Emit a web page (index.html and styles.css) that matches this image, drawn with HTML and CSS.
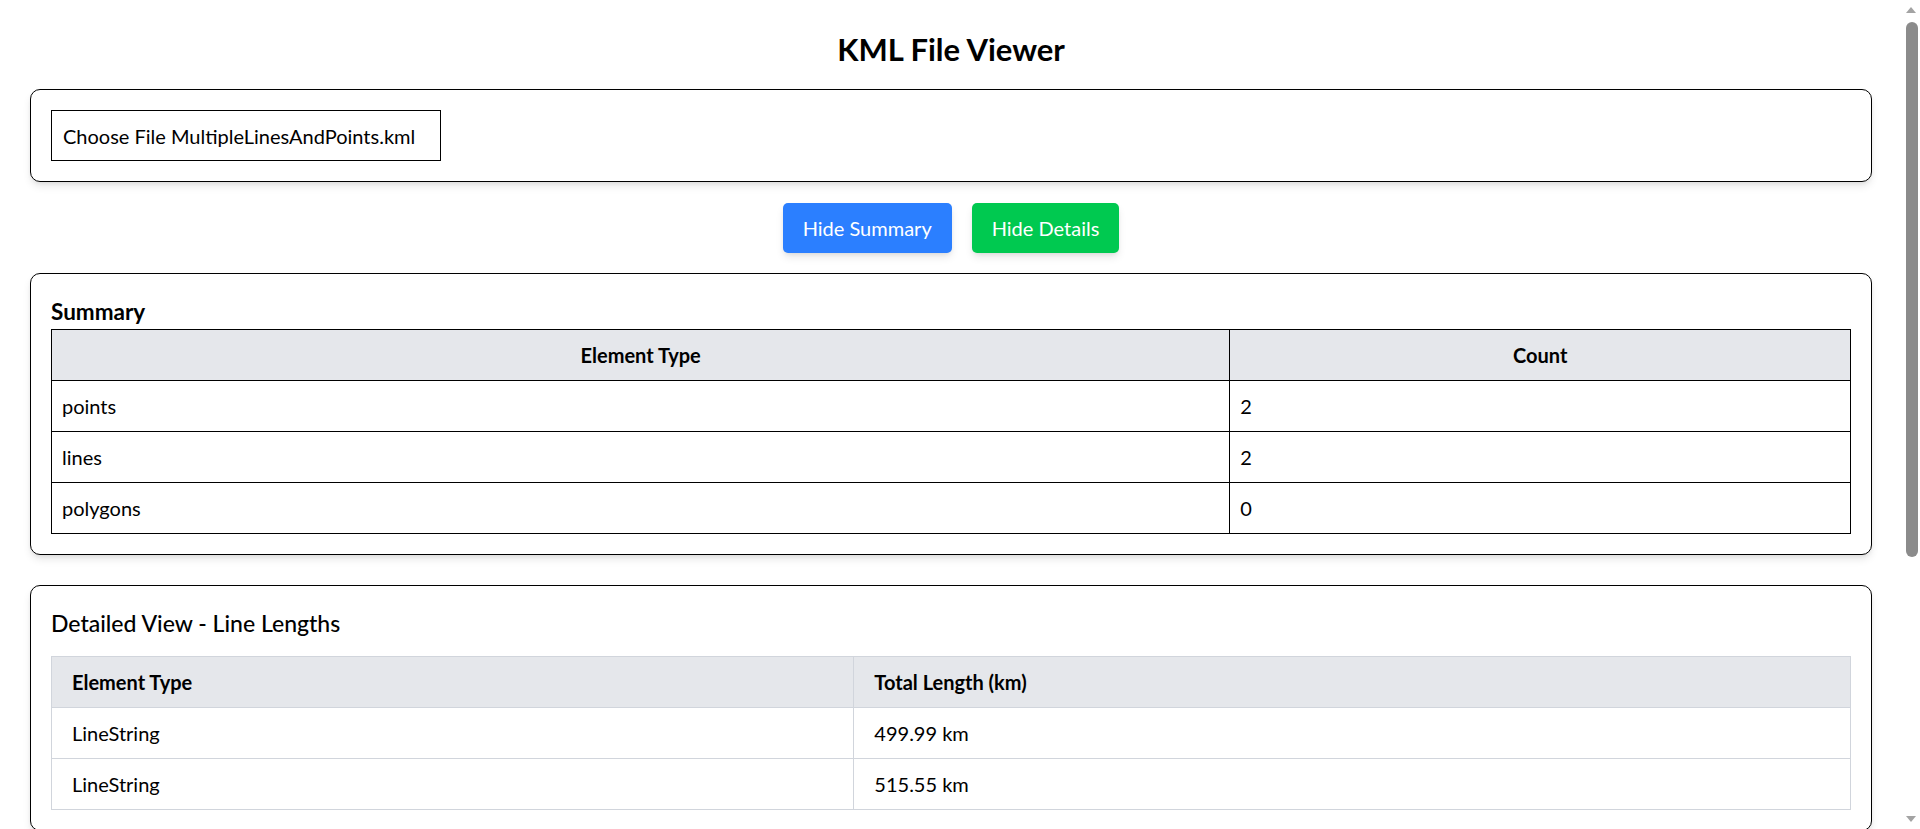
FILE: index.html
```html
<!DOCTYPE html>
<html lang="en">
<head>
<meta charset="utf-8">
<title>KML File Viewer</title>
<link rel="stylesheet" href="styles.css">
</head>
<body>
<div class="page">
  <h1 class="title">KML File Viewer</h1>

  <section class="card upload-card">
    <div class="file-input"><span class="file-btn">Choose File</span> <span class="file-name">MultipleLinesAndPoints.kml</span></div>
  </section>

  <div class="actions">
    <button class="btn btn-blue" type="button">Hide Summary</button>
    <button class="btn btn-green" type="button">Hide Details</button>
  </div>

  <section class="card summary-card">
    <h2 class="summary-title">Summary</h2>
    <table class="summary-table">
      <thead>
        <tr><th class="col-type">Element Type</th><th>Count</th></tr>
      </thead>
      <tbody>
        <tr><td>points</td><td>2</td></tr>
        <tr><td>lines</td><td>2</td></tr>
        <tr><td>polygons</td><td>0</td></tr>
      </tbody>
    </table>
  </section>

  <section class="card details-card">
    <h2 class="details-title">Detailed View - Line Lengths</h2>
    <table class="details-table">
      <thead>
        <tr><th class="col-type">Element Type</th><th>Total Length (km)</th></tr>
      </thead>
      <tbody>
        <tr><td>LineString</td><td>499.99 km</td></tr>
        <tr><td>LineString</td><td>515.55 km</td></tr>
      </tbody>
    </table>
  </section>
</div>

<div class="scrollbar" aria-hidden="true">
  <span class="sb-arrow sb-up"></span>
  <span class="sb-thumb"></span>
  <span class="sb-arrow sb-down"></span>
</div>
</body>
</html>
```

FILE: styles.css
```css
* { box-sizing: border-box; }

html, body {
  margin: 0;
  padding: 0;
  background: #ffffff;
}

body {
  font-family: "Segoe UI", Lato, "Liberation Sans", sans-serif;
  color: #000000;
  font-size: 20px;
  line-height: 30px;
}

.page {
  padding: 29px 48px 60px 30px;
}

.title {
  margin: 0 0 20px;
  font-size: 31px;
  line-height: 40px;
  font-weight: 700;
  text-align: center;
}

.card {
  background: #ffffff;
  border: 1px solid #000000;
  border-radius: 10px;
  padding: 20px;
  box-shadow: 0 5px 8px -1px rgba(0, 0, 0, 0.1), 0 2px 5px -2px rgba(0, 0, 0, 0.1);
}

.upload-card {
  margin-bottom: 21px;
}

.file-input {
  display: inline-flex;
  align-items: center;
  gap: 5px;
  height: 51px;
  width: 390px;
  padding: 0 11px;
  border: 1px solid #000000;
  font-size: 20px;
  white-space: nowrap;
}

.actions {
  display: flex;
  justify-content: center;
  gap: 20px;
  margin-bottom: 20px;
}

.btn {
  font-family: inherit;
  font-size: 20px;
  line-height: 30px;
  color: #ffffff;
  border: none;
  border-radius: 5px;
  padding: 10px 20px;
  cursor: pointer;
  box-shadow: 0 5px 8px -1px rgba(0, 0, 0, 0.1), 0 2px 5px -2px rgba(0, 0, 0, 0.1);
}

.btn-blue { background: #2b7fff; }
.btn-green { background: #00c950; }

.summary-title {
  margin: 0;
  font-size: 22.5px;
  line-height: 35px;
  font-weight: 700;
}

.summary-table,
.details-table {
  width: 100%;
  border-collapse: collapse;
}

.summary-table th,
.summary-table td {
  border: 1px solid #000000;
  padding: 10px;
  line-height: 30px;
}

.summary-table th {
  background: #e5e7eb;
  font-weight: 700;
  text-align: center;
}

.summary-table td { text-align: left; }

.summary-table .col-type { width: 65.5%; }

.details-card {
  margin-top: 30px;
}

.details-title {
  margin: 0 0 15px;
  font-size: 23px;
  line-height: 35px;
  font-weight: 500;
}

.details-table th,
.details-table td {
  border: 1px solid #d1d5dc;
  padding: 10px 20px;
  line-height: 30px;
  text-align: left;
}

.details-table th {
  background: #e5e7eb;
  font-weight: 700;
}

.details-table .col-type { width: 44.6%; }

/* browser scrollbar chrome, drawn over the right edge of the window */
.scrollbar {
  position: fixed;
  top: 0;
  right: 0;
  width: 18px;
  height: 100vh;
  background: #ffffff;
  display: flex;
  flex-direction: column;
  align-items: center;
  padding: 7px 0;
}

.sb-arrow {
  width: 0;
  height: 0;
  border-left: 5px solid transparent;
  border-right: 5px solid transparent;
}

.sb-up {
  border-bottom: 6px solid #a3a3a3;
}

.sb-down {
  border-top: 6px solid #a3a3a3;
  margin-top: auto;
}

.sb-thumb {
  width: 12px;
  height: 535px;
  margin-top: 9px;
  margin-left: 1px;
  border-radius: 6px;
  background: #8b8b8b;
}
```
